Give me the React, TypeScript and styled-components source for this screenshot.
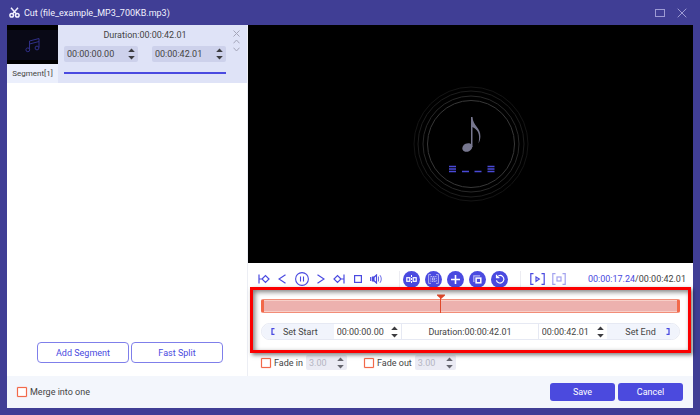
import React from "react";
import styled, { createGlobalStyle } from "styled-components";

const INDIGO = "#4a4ae0";
const ORANGE = "#f2694a";

const GlobalStyle = createGlobalStyle`
  * { box-sizing: border-box; }
  body { margin: 0; }
  body, button, input { font-family: Roboto, "Noto Sans", sans-serif; font-size: 9px; line-height: 12px; color: #444; }
  button { padding: 0; border: 0; background: none; cursor: pointer; }
  svg { display: block; }
`;

const Window = styled.div`
  display: flex;
  flex-direction: column;
  min-height: 100vh;
  padding: 0 7px 7px;
  background: #403e95;
`;

const TitleBar = styled.header`
  display: flex;
  align-items: center;
  height: 25px;
  padding: 0 2px;
  gap: 4px;
  color: #f2f2ff;
`;

const Title = styled.h1`
  flex: 1;
  margin: 0;
  font-size: 9px;
  line-height: 12px;
  font-weight: 400;
`;

const WindowButton = styled.button`
  display: grid;
  place-items: center;
  width: 18px;
  height: 14px;
  color: #9d9bd4;
`;

const Body = styled.main`
  flex: 1;
  display: grid;
  grid-template-columns: 241px 1fr;
  background: #fff;
`;

const Sidebar = styled.aside`
  display: flex;
  flex-direction: column;
  justify-content: space-between;
  border-right: 1px solid #eceef4;
`;

const Segment = styled.section`
  display: grid;
  grid-template-columns: 51px 1fr 21px;
  height: 58px;
  background: #dfe3f7;
`;

const Preview = styled.div`
  display: flex;
  flex-direction: column;
`;

const Thumb = styled.div`
  display: grid;
  place-items: center;
  height: 39px;
  background: #090916;
  border-top: 5px solid #000;
  border-bottom: 4px solid #000;
`;

const SegmentName = styled.div`
  flex: 1;
  display: grid;
  place-items: center;
  font-size: 8px;
  background: #ebeffc;
`;

const SegmentInfo = styled.div`
  display: flex;
  flex-direction: column;
  padding: 4px 0 0 6px;
`;

const SegmentDuration = styled.div`
  text-align: center;
  margin-bottom: 5px;
`;

const SegmentTimes = styled.div`
  display: flex;
  gap: 14px;
`;

const SegmentTrack = styled.div`
  height: 2px;
  margin-top: 10px;
  background: ${INDIGO};
`;

const SegmentActions = styled.div`
  display: flex;
  flex-direction: column;
  align-items: center;
  padding-top: 4px;
`;

const SmallButton = styled.button`
  display: grid;
  place-items: center;
  width: 10px;
  height: 8px;
  color: #a4a5b8;
`;

type SpinTone = "tinted" | "plain" | "disabled";
const spinFill = { tinted: "#cdd1eb", plain: "transparent", disabled: "#ebebf4" };

const SpinBox = styled.div<{ $tone: SpinTone }>`
  display: flex;
  align-items: center;
  flex: ${(p) => (p.$tone === "disabled" ? "0 0 41px" : "1 1 0")};
  min-width: 0;
  height: ${(p) => (p.$tone === "tinted" ? 16 : 15)}px;
  padding: 0 3px;
  border-radius: 2px;
  background: ${(p) => spinFill[p.$tone]};
`;

const SpinInput = styled.input`
  flex: 1;
  min-width: 0;
  width: 0;
  height: 14px;
  padding: 0;
  border: 0;
  outline: 0;
  background: none;
  &:disabled { color: #b5b5c2; }
`;

const SpinArrows = styled.div`
  display: flex;
  flex-direction: column;
  gap: 4px;
`;

const ArrowButton = styled.button`
  width: 7px;
  height: 4px;
`;

const SegmentButtons = styled.div`
  display: flex;
  justify-content: center;
  gap: 2px;
  padding: 0 0 13px 6px;
`;

const OutlineButton = styled.button`
  width: 92px;
  height: 21px;
  border: 1px solid #7f7fea;
  border-radius: 4px;
  color: ${INDIGO};
  background: #fff;
`;

const Main = styled.section`
  display: flex;
  flex-direction: column;
  min-width: 0;
`;

const Screen = styled.div`
  flex: 1;
  display: grid;
  place-items: center;
  background: #000;
`;

const Controls = styled.div`
  display: flex;
  flex-direction: column;
  padding-bottom: 6px;
`;

const Toolbar = styled.div`
  display: flex;
  align-items: center;
  height: 32px;
  padding: 0 7px 0 10px;
`;

const PlayerGroup = styled.div`
  display: flex;
  align-items: center;
  justify-content: space-between;
  flex: 0 0 124px;
`;

const EditGroup = styled.div`
  display: flex;
  align-items: center;
  gap: 5px;
  margin-left: 17px;
  padding: 0 14px 0 3px;
  border-left: 1px solid #ececf2;
`;

const PreviewGroup = styled.div`
  display: flex;
  align-items: center;
  gap: 7px;
  margin-left: -10px;
  padding-left: 19px;
`;

const GroupDivider = styled.div`
  width: 1px;
  height: 17px;
  margin-left: -2px;
  background: #ececf2;
`;

const IconButton = styled.button<{ $dim?: boolean }>`
  display: grid;
  place-items: center;
  color: ${INDIGO};
  opacity: ${(p) => (p.$dim ? 0.5 : 1)};
`;

const RoundButton = styled.button`
  display: grid;
  place-items: center;
  width: 17px;
  height: 17px;
  border-radius: 50%;
  color: #fff;
  background: ${INDIGO};
`;

const Clock = styled.div`
  margin-left: auto;
  white-space: nowrap;
  span { color: ${INDIGO}; }
`;

const TrimArea = styled.div`
  position: relative;
  display: flex;
  flex-direction: column;
  gap: 10px;
  padding: 4px 13px 0;
`;

const Highlight = styled.div`
  position: absolute;
  inset: -8px 2px -13px;
  border: 3px solid #fb0000;
  box-shadow: 2px 2px 4px rgba(0, 0, 0, 0.5), inset 2px 2px 5px rgba(0, 0, 0, 0.5);
  pointer-events: none;
`;

const Timeline = styled.div`
  position: relative;
  height: 14px;
  border: 1px solid #f28d78;
  border-left: 3px solid ${ORANGE};
  border-right: 3px solid ${ORANGE};
  border-radius: 2px;
  background: #edb1ae;
  box-shadow: inset 0 1px #f8cfc8, inset 0 -1px #f8cfc8;
`;

const Playhead = styled.div`
  position: absolute;
  top: -6px;
  left: 42%;
  color: #e0482a;
`;

const TrimRow = styled.div`
  display: grid;
  grid-template-columns: 72fr 68fr 138fr 69fr 72fr;
  height: 17px;
  border: 1px solid #e6e9f3;
  border-radius: 9px;
  overflow: hidden;
`;

const TrimButton = styled.button`
  display: flex;
  align-items: center;
  justify-content: space-between;
  padding: 0 16px 0 9px;
  background: #f1f4fc;
  &:last-child { padding: 0 9px 0 18px; }
`;

const TrimDuration = styled.div`
  display: grid;
  place-items: center;
  border: solid #e6e9f3;
  border-width: 0 1px;
`;

const FadeRow = styled.div`
  display: flex;
  align-items: center;
  margin-top: 15px;
  padding-left: 13px;
  gap: 17px;
`;

const FadeOption = styled.div`
  display: flex;
  align-items: center;
  gap: 3px;
`;

const CheckLabel = styled.label`
  display: flex;
  align-items: center;
  gap: 3px;
`;

const Checkbox = styled.input`
  appearance: none;
  width: 10px;
  height: 10px;
  margin: 0;
  border: 1px solid ${ORANGE};
  box-shadow: 0 0 1px ${ORANGE}, inset 0 0 1px ${ORANGE};
  border-radius: 1px;
  background: #fff;
`;

const Footer = styled.footer`
  display: flex;
  align-items: center;
  gap: 3px;
  height: 32px;
  padding: 0 10px;
  background: #f3f6fc;
  ${CheckLabel} { margin-right: auto; }
`;

const PrimaryButton = styled.button`
  width: 65px;
  height: 18px;
  border-radius: 3px;
  color: #fff;
  background: #4b4ade;
`;

function Spin({ value, tone, label }: { value: string; tone: SpinTone; label: string }) {
  const disabled = tone === "disabled";
  const fill = disabled ? "#66666f" : "#3c3c40";
  return (
    <SpinBox $tone={tone}>
      <SpinInput aria-label={label} defaultValue={value} disabled={disabled} />
      <SpinArrows>
        <ArrowButton aria-label={`Increase ${label}`} disabled={disabled}>
          <svg width="7" height="4" viewBox="0 0 7 4"><path d="M0.2 4L3.5 0.5L6.8 4Z" fill={fill} /></svg>
        </ArrowButton>
        <ArrowButton aria-label={`Decrease ${label}`} disabled={disabled}>
          <svg width="7" height="4" viewBox="0 0 7 4"><path d="M0.2 0L3.5 3.5L6.8 0Z" fill={fill} /></svg>
        </ArrowButton>
      </SpinArrows>
    </SpinBox>
  );
}

function Glyph({ w, h = w, stroke = 1.2, children }: { w: number; h?: number; stroke?: number; children: React.ReactNode }) {
  return (
    <svg width={w} height={h} viewBox={`0 0 ${w} ${h}`} fill="none" stroke="currentColor" strokeWidth={stroke}>
      {children}
    </svg>
  );
}

const Scissors = () => (
  <Glyph w={11} h={11} stroke={1.5}>
    <path d="M2 0.8L7 6.5M9 0.8L4 6.5" />
    <circle cx="2.7" cy="8.2" r="1.8" />
    <circle cx="8.3" cy="8.2" r="1.8" />
  </Glyph>
);

const ScreenArt = () => (
  <svg width="118" height="118" viewBox="0 0 118 118" fill="none">
    <circle cx="59" cy="59" r="57" stroke="#151515" />
    <circle cx="59" cy="59" r="53" stroke="#1e1e1e" />
    <circle cx="59" cy="59" r="48" stroke="#292929" />
    <circle cx="59" cy="59" r="43.5" stroke="#383838" />
    <ellipse cx="55.3" cy="62.5" rx="5.2" ry="4.1" transform="rotate(-25 55.3 62.5)" fill="#77778f" />
    <path d="M59 32H60.5C60.8 41 68.8 42.5 68.4 51.5C68.3 54.5 67.5 56.5 66.5 58.5C67.6 52 68 45.5 60.5 42V62H59Z" fill="#77778f" />
    <path d="M37 81.5H44M37 84H44M37 86.5H44M50 86.5H57M62.5 86.5H69.5M75.5 81.5H82.5M75.5 84H82.5M75.5 86.5H82.5" stroke="#4949d6" strokeWidth="1.3" />
  </svg>
);

export default function App() {
  return (
    <>
      <GlobalStyle />
      <Window>
        <TitleBar>
          <Scissors />
          <Title>Cut (file_example_MP3_700KB.mp3)</Title>
          <WindowButton aria-label="Maximize">
            <Glyph w={10} h={8} stroke={1}><rect x="0.5" y="0.5" width="9" height="7" /></Glyph>
          </WindowButton>
          <WindowButton aria-label="Close">
            <Glyph w={10} stroke={1}><path d="M0.7 0.7L9.3 9.3M9.3 0.7L0.7 9.3" /></Glyph>
          </WindowButton>
        </TitleBar>

        <Body>
          <Sidebar>
            <Segment>
              <Preview>
                <Thumb>
                  <svg width="16" height="16" viewBox="0 0 16 16" fill="none" stroke="#302f88">
                    <path d="M4.5 12.5V4L14 1.5V10.5M4.5 7L14 4.5" />
                    <circle cx="2.8" cy="12.8" r="1.9" />
                    <circle cx="12" cy="11" r="1.9" />
                  </svg>
                </Thumb>
                <SegmentName>Segment[1]</SegmentName>
              </Preview>
              <SegmentInfo>
                <SegmentDuration>Duration:00:00:42.01</SegmentDuration>
                <SegmentTimes>
                  <Spin value="00:00:00.00" tone="tinted" label="Segment start" />
                  <Spin value="00:00:42.01" tone="tinted" label="Segment end" />
                </SegmentTimes>
                <SegmentTrack />
              </SegmentInfo>
              <SegmentActions>
                <SmallButton aria-label="Remove segment"><Glyph w={7} stroke={1}><path d="M0.5 0.5L6.5 6.5M6.5 0.5L0.5 6.5" /></Glyph></SmallButton>
                <SmallButton aria-label="Move up"><Glyph w={7} h={5} stroke={1}><path d="M0.5 4.3L3.5 1L6.5 4.3" /></Glyph></SmallButton>
                <SmallButton aria-label="Move down"><Glyph w={7} h={5} stroke={1}><path d="M0.5 0.7L3.5 4L6.5 0.7" /></Glyph></SmallButton>
              </SegmentActions>
            </Segment>
            <SegmentButtons>
              <OutlineButton>Add Segment</OutlineButton>
              <OutlineButton>Fast Split</OutlineButton>
            </SegmentButtons>
          </Sidebar>

          <Main>
            <Screen><ScreenArt /></Screen>
            <Controls>
              <Toolbar>
                <PlayerGroup>
                  <IconButton aria-label="Go to start"><Glyph w={12} h={10}><path d="M1 0.5V9.5M1 5H4M4 5L7.5 1.5L11 5L7.5 8.5Z" /></Glyph></IconButton>
                  <IconButton aria-label="Previous frame"><Glyph w={8} h={10}><path d="M7.5 0.7L1 5L7.5 9.3" /></Glyph></IconButton>
                  <IconButton aria-label="Pause"><Glyph w={14} stroke={1.1}><circle cx="7" cy="7" r="6.4" /><path d="M5.5 4.5V9.5M8.5 4.5V9.5" /></Glyph></IconButton>
                  <IconButton aria-label="Next frame"><Glyph w={8} h={10}><path d="M0.5 0.7L7 5L0.5 9.3" /></Glyph></IconButton>
                  <IconButton aria-label="Go to end"><Glyph w={12} h={10}><path d="M11 0.5V9.5M11 5H8M8 5L4.5 1.5L1 5L4.5 8.5Z" /></Glyph></IconButton>
                  <IconButton aria-label="Stop"><Glyph w={8}><rect x="0.6" y="0.6" width="6.8" height="6.8" /></Glyph></IconButton>
                  <IconButton aria-label="Volume"><Glyph w={12} h={10}><path d="M0.7 3V7M2.5 3H4V7H2.5Z" fill="currentColor" /><path d="M4 3.3L6.5 1V9L4 6.7" /><path d="M8.5 2.5V7.5M10 1.2C11.7 3.5 11.7 6.5 10 8.8" strokeWidth="0.8" /></Glyph></IconButton>
                </PlayerGroup>
                <EditGroup>
                  <RoundButton aria-label="Split"><Glyph w={11} h={9}><rect x="0.8" y="2.7" width="3" height="3.6" /><rect x="7.2" y="2.7" width="3" height="3.6" /><path d="M5.5 0V9" strokeWidth="1" strokeDasharray="2 1" /></Glyph></RoundButton>
                  <RoundButton aria-label="Crop segment"><Glyph w={11} h={10} stroke={0.8}><g opacity="0.7"><path d="M3 0.6H0.6V9.4H3M8 0.6H10.4V9.4H8" /><rect x="2.8" y="2.5" width="5.4" height="5" strokeDasharray="1.5 0.7" /><rect x="4.5" y="4" width="2" height="2" /></g></Glyph></RoundButton>
                  <RoundButton aria-label="Add"><Glyph w={9} stroke={1.6}><path d="M4.5 0V9M0 4.5H9" /></Glyph></RoundButton>
                  <RoundButton aria-label="Copy"><Glyph w={9}><path d="M1.5 6.5H0.8V0.8H6.5V1.5" opacity="0.6" /><rect x="3.1" y="3.1" width="4.7" height="4.7" strokeWidth="1.5" /></Glyph></RoundButton>
                  <RoundButton aria-label="Reset"><Glyph w={10}><path d="M1.8 3.3A3.8 3.8 0 1 1 1.4 6.3M1.5 0.8V3.7H4.4" /></Glyph></RoundButton>
                </EditGroup>
                <GroupDivider />
                <PreviewGroup>
                  <IconButton aria-label="Play segment"><Glyph w={15} h={12}><path d="M3.5 0.6H0.8V11.4H3.5M11.5 0.6H14.2V11.4H11.5" /><path d="M6 4L9.3 6L6 8.3Z" /></Glyph></IconButton>
                  <IconButton aria-label="Stop segment" $dim><Glyph w={14} h={12}><path d="M3.5 0.6H0.8V11.4H3.5M10.5 0.6H13.2V11.4H10.5" /><rect x="5" y="4" width="4" height="4" /></Glyph></IconButton>
                </PreviewGroup>
                <Clock><span>00:00:17.24</span>/00:00:42.01</Clock>
              </Toolbar>

              <TrimArea>
                <Timeline>
                  <Playhead>
                    <svg width="8" height="19" viewBox="0 0 8 19" fill="currentColor"><path d="M0 0.5H8V1.5L4 5L0 1.5Z" /><rect x="3" y="4" width="1" height="15" /></svg>
                  </Playhead>
                </Timeline>
                <TrimRow>
                  <TrimButton>
                    <svg width="4" height="7" viewBox="0 0 4 7" fill="none" stroke={INDIGO} strokeWidth="1.3"><path d="M3.5 0.7H1V6.3H3.5" /></svg>
                    Set Start
                  </TrimButton>
                  <Spin value="00:00:00.00" tone="plain" label="Start time" />
                  <TrimDuration>Duration:00:00:42.01</TrimDuration>
                  <Spin value="00:00:42.01" tone="plain" label="End time" />
                  <TrimButton>
                    Set End
                    <svg width="4" height="7" viewBox="0 0 4 7" fill="none" stroke={INDIGO} strokeWidth="1.3"><path d="M0.5 0.7H3V6.3H0.5" /></svg>
                  </TrimButton>
                </TrimRow>
                <Highlight />
              </TrimArea>

              <FadeRow>
                <FadeOption>
                  <CheckLabel><Checkbox type="checkbox" />Fade in</CheckLabel>
                  <Spin value="3.00" tone="disabled" label="Fade in seconds" />
                </FadeOption>
                <FadeOption>
                  <CheckLabel><Checkbox type="checkbox" />Fade out</CheckLabel>
                  <Spin value="3.00" tone="disabled" label="Fade out seconds" />
                </FadeOption>
              </FadeRow>
            </Controls>
          </Main>
        </Body>

        <Footer>
          <CheckLabel><Checkbox type="checkbox" />Merge into one</CheckLabel>
          <PrimaryButton>Save</PrimaryButton>
          <PrimaryButton>Cancel</PrimaryButton>
        </Footer>
      </Window>
    </>
  );
}
